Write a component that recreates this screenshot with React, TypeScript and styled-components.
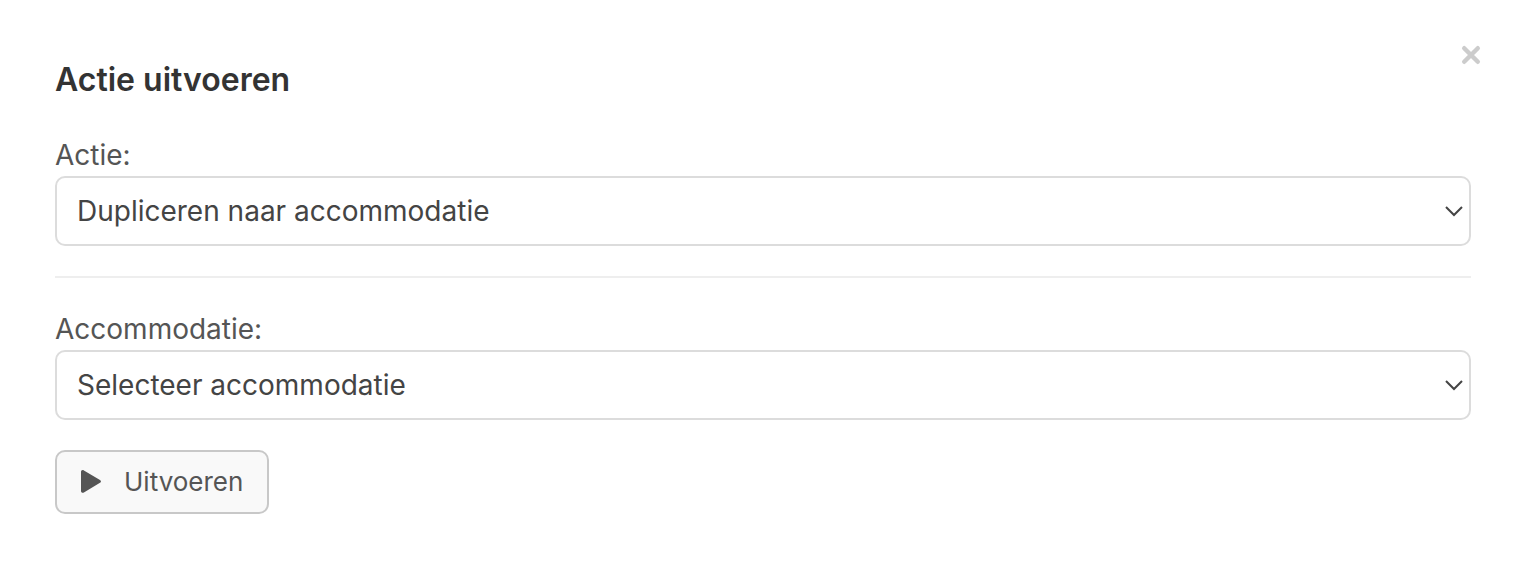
import React from "react";
import styled, { createGlobalStyle } from "styled-components";

const GlobalStyle = createGlobalStyle`
  *, *::before, *::after { box-sizing: border-box; }
  body {
    margin: 0;
    background: #fff;
    color: #555;
    font-family: Inter, "Liberation Sans", sans-serif;
    font-size: 28px;
    line-height: 38px;
    -webkit-font-smoothing: antialiased;
  }
`;

const Dialog = styled.section`
  position: relative;
  padding: 60px 53px 56px 55px;
`;

const Title = styled.h1`
  margin: 0 0 36px;
  color: #333;
  font-size: 32px;
  font-weight: 600;
  line-height: 40px;
`;

const CloseButton = styled.button`
  position: absolute;
  top: 40px;
  right: 38px;
  display: flex;
  align-items: center;
  justify-content: center;
  width: 30px;
  height: 30px;
  padding: 0;
  border: 0;
  background: none;
  color: #ccc;
  cursor: pointer;
`;

const Label = styled.label`
  display: block;
  margin-bottom: 2px;
`;

const SelectBox = styled.div`
  display: grid;
  align-items: center;
  > * { grid-area: 1 / 1; }
  > svg {
    justify-self: end;
    margin-right: 8px;
    pointer-events: none;
  }
`;

const Select = styled.select`
  appearance: none;
  width: 100%;
  height: 70px;
  padding: 0 40px 0 20px;
  border: 2px solid #dcdcdc;
  border-radius: 10px;
  background: #fff;
  color: #444;
  font: inherit;
`;

const Divider = styled.hr`
  height: 2px;
  margin: 30px 0 32px;
  border: 0;
  background: #eee;
`;

const RunButton = styled.button`
  display: flex;
  align-items: center;
  gap: 22px;
  height: 64px;
  margin-top: 30px;
  padding: 0 24px;
  border: 2px solid #c8c8c8;
  border-radius: 10px;
  background: #f9f9f9;
  color: #555;
  font: inherit;
  font-size: 26px;
  cursor: pointer;
`;

type FieldProps = { id: string; label: string; option: string };

function Field({ id, label, option }: FieldProps) {
  return (
    <div>
      <Label htmlFor={id}>{label}</Label>
      <SelectBox>
        <Select id={id}>
          <option>{option}</option>
        </Select>
        <svg width="18" height="12" viewBox="0 0 18 12" fill="none" stroke="#444" strokeWidth="2" aria-hidden="true">
          <path d="M1 2l8 8 8-8" />
        </svg>
      </SelectBox>
    </div>
  );
}

export default function App() {
  return (
    <>
      <GlobalStyle />
      <Dialog role="dialog" aria-labelledby="title">
        <Title id="title">Actie uitvoeren</Title>
        <CloseButton type="button" aria-label="Sluiten">
          <svg width="20" height="20" viewBox="0 0 20 20" fill="none" stroke="currentColor" strokeWidth="4.400" strokeLinecap="round">
            <path d="M3.200 3.200l13.600 13.600M16.800 3.200L3.200 16.800" />
          </svg>
        </CloseButton>
        <Field id="action" label="Actie:" option="Dupliceren naar accommodatie" />
        <Divider />
        <Field id="accommodation" label="Accommodatie:" option="Selecteer accommodatie" />
        <RunButton type="button">
          <svg width="21" height="24" viewBox="0 0 21 24" fill="currentColor" aria-hidden="true">
            <path d="M0 2C0 .3 1.500-.4 2.900.5L19 10c1.300.8 1.300 2 0 2.800L2.900 22.400C1.500 23.200 0 22.500 0 20.900z" />
          </svg>
          Uitvoeren
        </RunButton>
      </Dialog>
    </>
  );
}
